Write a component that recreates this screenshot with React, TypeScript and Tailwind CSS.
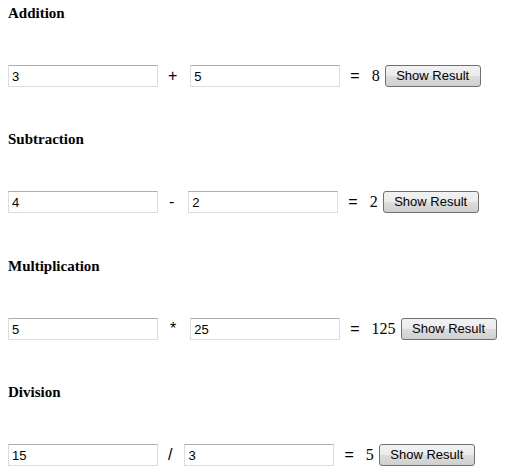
import React, { useState } from "react";

type Op = {
  title: string;
  a: string;
  b: string;
  op: string;
  opClass: string;
  sectionClass: string;
  calc: (x: number, y: number) => number;
};

const ops: Op[] = [
  { title: "Addition", a: "3", b: "5", op: "+", opClass: "ml-[10px] mr-[13px]", sectionClass: "pb-[43px]", calc: (x, y) => x + y },
  { title: "Subtraction", a: "4", b: "2", op: "-", opClass: "ml-[11px] mr-[14px]", sectionClass: "pb-[44px]", calc: (x, y) => x - y },
  { title: "Multiplication", a: "5", b: "25", op: "*", opClass: "ml-[12px] mr-[14px]", sectionClass: "pb-[43px]", calc: (x, y) => x * y },
  { title: "Division", a: "15", b: "3", op: "/", opClass: "ml-[10px] mr-[12px]", sectionClass: "pb-[8px]", calc: (x, y) => x / y },
];

function Section({ o }: { o: Op }) {
  const [a, setA] = useState(o.a);
  const [b, setB] = useState(o.b);
  const [res, setRes] = useState(String(o.calc(Number(o.a), Number(o.b))));
  return (
    <div className={o.sectionClass}>
      <h4 className="h-[18px] text-[15px] leading-[18px] font-bold text-black [font-family:'Liberation_Serif',serif]">
        {o.title}
      </h4>
      <div className="mt-[43px] flex h-[22px] items-center">
        <input
          value={a}
          onChange={(e) => setA(e.target.value)}
          className="h-[22px] w-[150px] border border-[#dcdde3] border-t-[#abadb3] bg-white px-[3px] text-[13px] text-black outline-none [font-family:'Liberation_Sans',sans-serif]"
        />
        <span className={`${o.opClass} text-[16px] text-black [font-family:'Liberation_Sans',sans-serif]`}>{o.op}</span>
        <input
          value={b}
          onChange={(e) => setB(e.target.value)}
          className="h-[22px] w-[150px] border border-[#dcdde3] border-t-[#abadb3] bg-white px-[3px] text-[13px] text-black outline-none [font-family:'Liberation_Sans',sans-serif]"
        />
        <span className="ml-[10px] mr-[12px] text-[16px] text-black [font-family:'Liberation_Sans',sans-serif]">=</span>
        <span className="text-[16px] text-black [font-family:'Liberation_Serif',serif]">{res}</span>
        <button
          onClick={() => setRes(String(o.calc(Number(a), Number(b))))}
          className="ml-[5px] h-[22px] w-[96px] rounded-[3px] border border-[#707070] bg-[linear-gradient(to_bottom,#f2f2f2_0%,#ebebeb_50%,#dddddd_50%,#cfcfcf_100%)] text-center text-[13px] leading-[20px] text-black [font-family:'Liberation_Sans',sans-serif]"
        >
          Show Result
        </button>
      </div>
    </div>
  );
}

export default function App() {
  return (
    <div className="min-h-[474px] w-[509px] bg-white pl-[8px] pt-[4px]">
      {ops.map((o) => (
        <Section key={o.title} o={o} />
      ))}
    </div>
  );
}
